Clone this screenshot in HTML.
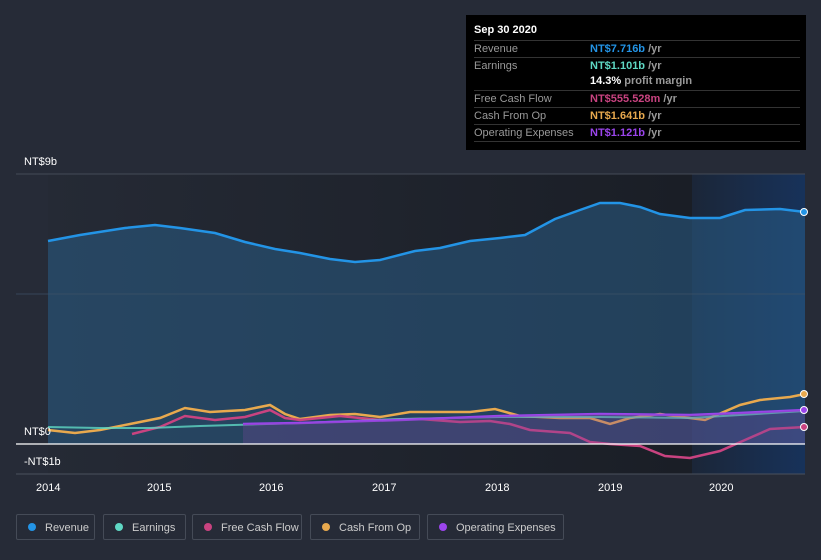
<!DOCTYPE html><html><head><style>
body{margin:0;background:#262b37;font-family:"Liberation Sans",sans-serif;width:821px;height:560px;overflow:hidden;position:relative}
.tt{position:absolute;left:466px;top:15px;width:340px;height:135px;background:#000;color:#fff;font-size:11px}
.tt .h{position:absolute;left:8px;top:9px;font-weight:bold}
.row{position:absolute;left:8px;width:326px;height:16px;border-top:1px solid #333;color:#999;line-height:16px}
.row b{position:absolute;left:116px;font-weight:bold}
.row span{color:#999}
.lg{position:absolute;top:514px;height:26px;border:1px solid #454b57;border-radius:2px;color:#ccc;font-size:11px;line-height:26px;box-sizing:border-box}
.lg i{display:inline-block;width:8px;height:8px;border-radius:50%;margin:0 9px 0 11px;vertical-align:-0px}
.ax{position:absolute;color:#fff;font-size:11px}
</style></head><body>
<svg width="821" height="560" style="position:absolute;left:0;top:0">
<defs>
<linearGradient id="bg" x1="0" x2="1" y1="0" y2="0"><stop offset="0" stop-color="#252a35"/><stop offset="1" stop-color="#1a1e26"/></linearGradient>
<linearGradient id="hl" x1="0" x2="1" y1="0" y2="0"><stop offset="0" stop-color="#1b2638"/><stop offset="1" stop-color="#17325a"/></linearGradient>
</defs>
<rect x="48" y="174" width="644" height="300" fill="url(#bg)"/>
<rect x="692" y="174" width="113" height="300" fill="url(#hl)"/>
<line x1="16" y1="174" x2="805" y2="174" stroke="#444b57"/>
<path d="M48,241 L80,235 L125,228 L155,225 L180,228 L215,233 L245,242 L275,249 L300,253 L330,259 L355,262 L380,260 L415,251 L440,248 L470,241 L500,238 L525,235 L555,219 L580,210 L600,203 L620,203 L640,207 L660,214 L690,218 L720,218 L745,210 L780,209 L805,212 L805,444 L48,444Z" fill="#2a5c86" opacity="0.55"/>
<line x1="16" y1="294" x2="805" y2="294" stroke="#3f5366" stroke-opacity="0.7"/>
<line x1="16" y1="474" x2="805" y2="474" stroke="#4a505c"/>
<path d="M48,241 L80,235 L125,228 L155,225 L180,228 L215,233 L245,242 L275,249 L300,253 L330,259 L355,262 L380,260 L415,251 L440,248 L470,241 L500,238 L525,235 L555,219 L580,210 L600,203 L620,203 L640,207 L660,214 L690,218 L720,218 L745,210 L780,209 L805,212" fill="none" stroke="#2394e6" stroke-width="2.5"/>
<path d="M48,430 L75,433 L100,430 L130,424 L160,418 L185,408 L210,412 L245,410 L270,405 L285,414 L300,419 L330,415 L355,414 L380,417 L410,412 L470,412 L495,409 L520,416 L560,418 L590,418 L610,424 L630,418 L660,414 L690,418 L705,420 L740,405 L760,400 L790,397 L805,394" fill="none" stroke="#e8a94e" stroke-width="2.5"/>
<path d="M132,434 L160,427 L185,416 L215,420 L245,417 L270,410 L285,418 L300,420 L340,416 L380,420 L420,419 L460,422 L490,421 L510,424 L530,430 L570,433 L590,442 L610,444 L640,446 L665,456 L690,458 L720,451 L745,440 L770,429 L805,427" fill="none" stroke="#c94380" stroke-width="2.5"/>
<path d="M48,427 L100,428 L150,428 L200,426 L300,423 L400,419 L500,417 L600,417 L690,418 L740,415 L805,411" fill="none" stroke="#5fd8c4" stroke-width="2" opacity="0.8"/>
<path d="M243,424 L300,423 L400,420 L500,416 L600,414 L690,415 L740,413 L805,410" fill="none" stroke="#9b45ec" stroke-width="2.5"/>
<path d="M243,424 L300,423 L400,420 L500,416 L600,414 L690,415 L740,413 L805,410 L805,444 L243,444Z" fill="#7a4aa0" opacity="0.3"/>
<line x1="16" y1="444" x2="805" y2="444" stroke="#fff" stroke-width="1.2"/>
<circle cx="804" cy="212" r="3.5" fill="#2394e6" stroke="#fff"/>
<circle cx="804" cy="394" r="3.5" fill="#e8a94e" stroke="#fff"/>
<circle cx="804" cy="410" r="3.5" fill="#9b45ec" stroke="#fff"/>
<circle cx="804" cy="427" r="3.5" fill="#c94380" stroke="#fff"/>
</svg>
<div class="ax" style="left:24px;top:156px">NT$9b</div>
<div class="ax" style="left:24px;top:426px">NT$0</div>
<div class="ax" style="left:24px;top:456px">-NT$1b</div>
<div class="ax" style="left:36px;top:482px">2014</div>
<div class="ax" style="left:147px;top:482px">2015</div>
<div class="ax" style="left:259px;top:482px">2016</div>
<div class="ax" style="left:372px;top:482px">2017</div>
<div class="ax" style="left:485px;top:482px">2018</div>
<div class="ax" style="left:598px;top:482px">2019</div>
<div class="ax" style="left:709px;top:482px">2020</div>
<div class="tt"><div class="h">Sep 30 2020</div>
<div class="row" style="top:25px">Revenue<b style="color:#2394e6">NT$7.716b <span>/yr</span></b></div>
<div class="row" style="top:42px">Earnings<b style="color:#5fd8c4">NT$1.101b <span>/yr</span></b></div>
<div class="row" style="top:58px;border:none"><b style="color:#fff">14.3% <span>profit margin</span></b></div>
<div class="row" style="top:75px">Free Cash Flow<b style="color:#c94380">NT$555.528m <span>/yr</span></b></div>
<div class="row" style="top:92px">Cash From Op<b style="color:#e8a94e">NT$1.641b <span>/yr</span></b></div>
<div class="row" style="top:109px;border-bottom:1px solid #333">Operating Expenses<b style="color:#9b45ec">NT$1.121b <span>/yr</span></b></div>
</div>
<div class="lg" style="left:16px;width:79px"><i style="background:#2394e6"></i>Revenue</div>
<div class="lg" style="left:103px;width:83px"><i style="background:#5fd8c4"></i>Earnings</div>
<div class="lg" style="left:192px;width:110px"><i style="background:#c94380"></i>Free Cash Flow</div>
<div class="lg" style="left:310px;width:110px"><i style="background:#e8a94e"></i>Cash From Op</div>
<div class="lg" style="left:427px;width:137px"><i style="background:#9b45ec"></i>Operating Expenses</div>
</body></html>
